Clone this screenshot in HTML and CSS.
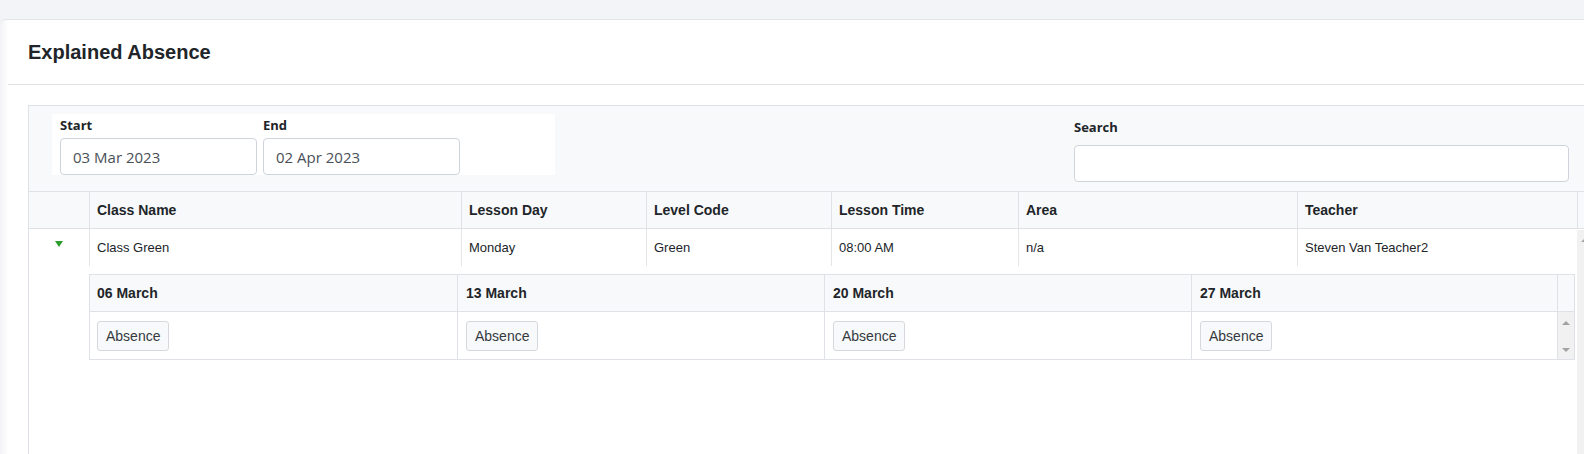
FILE: index.html
```html
<!DOCTYPE html>
<html lang="en">
<head>
<meta charset="utf-8">
<title>Explained Absence</title>
<link rel="stylesheet" href="styles.css">
</head>
<body>
<div class="card">
  <div class="card-header">
    <h1 class="title">Explained Absence</h1>
  </div>
  <div class="card-body">
    <div class="panel">
      <div class="filters">
        <div class="dates">
          <div class="field">
            <label class="label">Start</label>
            <input class="input" type="text" value="03 Mar 2023" readonly>
          </div>
          <div class="field">
            <label class="label">End</label>
            <input class="input" type="text" value="02 Apr 2023" readonly>
          </div>
        </div>
        <div class="search">
          <label class="label">Search</label>
          <input class="input search-input" type="text" value="">
        </div>
      </div>

      <div class="main-head">
        <div class="hcell"></div>
        <div class="hcell">Class Name</div>
        <div class="hcell">Lesson Day</div>
        <div class="hcell">Level Code</div>
        <div class="hcell">Lesson Time</div>
        <div class="hcell">Area</div>
        <div class="hcell">Teacher</div>
        <div class="hcell"></div>
      </div>

      <div class="main-body">
        <div class="body-content">
          <div class="row">
            <div class="dcell expander"><span class="caret"></span></div>
            <div class="dcell">Class Green</div>
            <div class="dcell">Monday</div>
            <div class="dcell">Green</div>
            <div class="dcell">08:00 AM</div>
            <div class="dcell">n/a</div>
            <div class="dcell">Steven Van Teacher2</div>
          </div>

          <div class="detail">
            <div class="detail-head">
              <div class="nh">06 March</div>
              <div class="nh">13 March</div>
              <div class="nh">20 March</div>
              <div class="nh">27 March</div>
              <div class="nh"></div>
            </div>
            <div class="detail-body">
              <div class="nd"><button class="btn" type="button">Absence</button></div>
              <div class="nd"><button class="btn" type="button">Absence</button></div>
              <div class="nd"><button class="btn" type="button">Absence</button></div>
              <div class="nd"><button class="btn" type="button">Absence</button></div>
              <div class="nscroll"><span class="tri-up"></span><span class="tri-down"></span></div>
            </div>
          </div>
        </div>
        <div class="vscroll"><span class="tri-up"></span></div>
      </div>
    </div>
  </div>
</div>
</body>
</html>
```
FILE: styles.css
```css
html, body {
  margin: 0;
  padding: 0;
  overflow: hidden;
}
body {
  width: 1584px;
  height: 454px;
  background: #f3f4f7;
  font-family: "Liberation Sans", Arial, sans-serif;
  color: #212529;
}
.card {
  margin-top: 19px;
  width: 1584px;
  height: 435px;
  box-sizing: border-box;
  border-top: 1px solid #e3e4e7;
  border-top-left-radius: 6px;
  background: linear-gradient(90deg, #f2f3f5 0, #fafafb 5px, #ffffff 9px);
  overflow: hidden;
}
.card-header {
  margin-left: 8px;
  padding: 20px 0 20px 20px;
  border-bottom: 1px solid #e0e2e5;
  background: #fff;
}
.title {
  margin: 0;
  font-size: 20px;
  line-height: 24px;
  font-weight: 700;
  color: #212529;
}
.card-body {
  padding: 20px 0 0 28px;
}
.panel {
  width: 1556px;
  height: 360px;
  border-left: 1px solid #dee2e6;
  border-top: 1px solid #dee2e6;
  background: #fff;
}
.filters {
  display: flex;
  height: 85px;
  box-sizing: border-box;
  padding: 8px 0 0 23px;
  background: #f8f9fa;
}
.dates {
  display: flex;
  gap: 6px;
  width: 503px;
  height: 61px;
  box-sizing: border-box;
  padding: 0 8px;
  background: #fff;
}
.field {
  display: flex;
  flex-direction: column;
  width: 197px;
}
.label {
  display: block;
  font-family: "Open Sans", sans-serif;
  font-weight: 700;
  font-size: 13px;
  line-height: 22px;
  color: #212529;
}
.input {
  margin: 1px 0 0;
  width: 197px;
  height: 38px;
  box-sizing: border-box;
  padding: 0 12px;
  border: 1px solid #ced4da;
  border-radius: 4px;
  background: #fff;
  font-family: "Open Sans", sans-serif;
  font-size: 15px;
  color: #495057;
  outline: none;
}
.field .input {
  margin-top: 2px;
  height: 37px;
}
.search {
  margin-left: 519px;
  padding-top: 2px;
}
.search .label {
  margin-bottom: 6px;
}
.search-input {
  width: 495px;
  height: 37px;
}

/* main grid */
.main-head {
  display: grid;
  grid-template-columns: 60px 372px 185px 185px 187px 279px 280px 7px;
  border-top: 1px solid #dee2e6;
  border-bottom: 1px solid #dee2e6;
  background: #f8f9fa;
}
.row {
  display: grid;
  grid-template-columns: 60px 372px 185px 185px 187px 279px 280px;
}
.hcell {
  height: 36px;
  box-sizing: border-box;
  padding: 0 7px;
  display: flex;
  align-items: center;
  font-size: 14px;
  font-weight: 700;
  color: #212529;
  white-space: nowrap;
  overflow: hidden;
}
.hcell + .hcell {
  border-left: 1px solid #dee2e6;
}
.main-body {
  display: grid;
  grid-template-columns: 1548px 7px;
  height: 236px;
}
.dcell {
  height: 37px;
  box-sizing: border-box;
  padding: 0 7px;
  display: flex;
  align-items: center;
  font-size: 13px;
  color: #212529;
  white-space: nowrap;
}
.dcell + .dcell {
  border-left: 1px solid #e3e6e9;
}
.expander {
  justify-content: center;
  align-items: flex-start;
  padding: 12px 0 0 0;
}
.caret {
  width: 0;
  height: 0;
  border-left: 4px solid transparent;
  border-right: 4px solid transparent;
  border-top: 6px solid #2b9e2b;
}
.vscroll {
  background: #f1f1f1;
  margin-top: 1px;
  display: flex;
  flex-direction: column;
  align-items: flex-start;
  padding: 8px 0 0 4px;
  box-sizing: border-box;
  overflow: hidden;
}
.tri-up {
  flex: none;
  width: 0;
  height: 0;
  border-left: 4px solid transparent;
  border-right: 4px solid transparent;
  border-bottom: 4px solid #a3a3a3;
}
.tri-down {
  flex: none;
  width: 0;
  height: 0;
  border-left: 4px solid transparent;
  border-right: 4px solid transparent;
  border-top: 4px solid #a3a3a3;
}

/* nested detail table */
.detail {
  margin: 8px 0 0 60px;
  width: 1486px;
  box-sizing: border-box;
  border: 1px solid #dee2e6;
}
.detail-head,
.detail-body {
  display: grid;
  grid-template-columns: 367px 367px 367px 366px 17px;
}
.detail-head {
  background: #f8f9fa;
  border-bottom: 1px solid #dee2e6;
}
.nh {
  height: 36px;
  box-sizing: border-box;
  padding: 0 8px;
  display: flex;
  align-items: center;
  font-size: 14px;
  font-weight: 700;
  color: #212529;
}
.nh:first-child {
  padding-left: 7px;
}
.nh + .nh,
.nd + .nd,
.nd + .nscroll {
  border-left: 1px solid #dee2e6;
}
.nd {
  height: 47px;
  box-sizing: border-box;
  padding: 0 8px;
  display: flex;
  align-items: center;
}
.nd:first-child {
  padding-left: 7px;
}
.btn {
  height: 30px;
  box-sizing: border-box;
  margin: 1px 0 0;
  padding: 0 8px;
  border: 1px solid #d5d8dc;
  border-radius: 3px;
  background: #f8f9fa;
  font-family: "Liberation Sans", Arial, sans-serif;
  font-size: 14px;
  color: #343a40;
}
.nscroll {
  background: #f1f1f1;
  display: flex;
  flex-direction: column;
  align-items: center;
  justify-content: space-between;
  padding: 9px 0 7px;
  box-sizing: border-box;
}
```
